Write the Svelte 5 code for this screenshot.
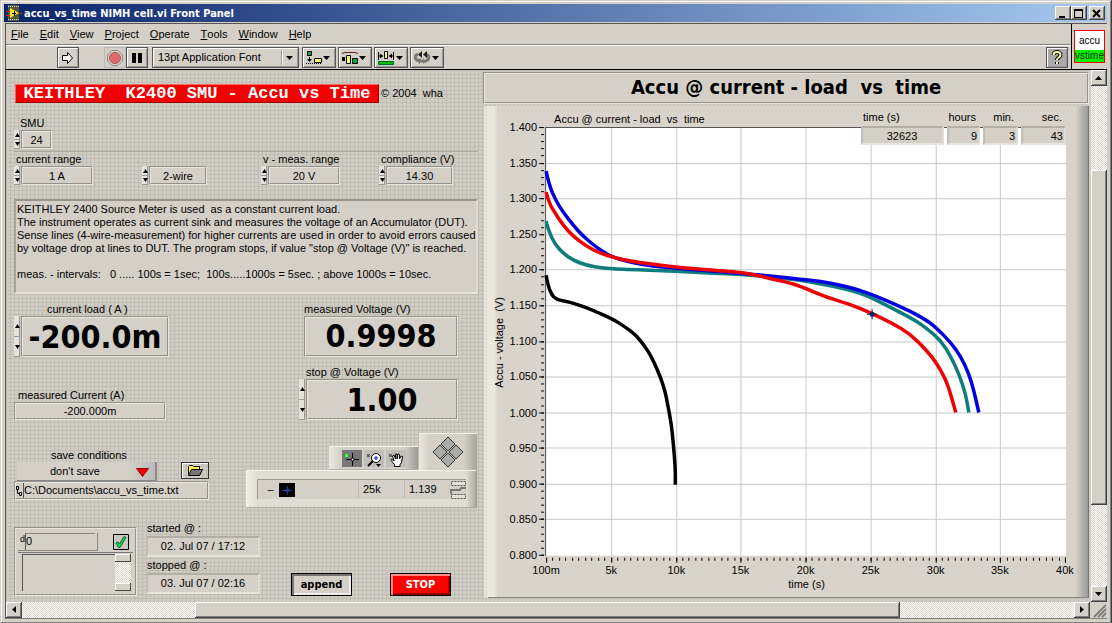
<script>
    const menus = ["File", "Edit", "View", "Project", "Operate", "Tools", "Window", "Help"];

    const PLOT_W = 519;
    const PLOT_H = 428;

    // points are relative to the top left corner of the plot area
    const curves = [
        {
            color: "#000",
            points: "0,148 2,159 6,168 9,171 14,173 24,175 34,178 47,183 67,192 78,199 89,207 98,218 105,229 111,242 116,255 119,265 121,275 125,296 127,316 129,340 129,357"
        },
        {
            color: "#0c7c7c",
            points: "0,94 3,105 9,117 17,126 27,133 40,138 57,141 77,142 130,144 167,146 194,147 227,150 254,153 287,159 304,163 320,168 340,178 367,192 380,201 394,213 404,229 412,246 419,267 422,285"
        },
        {
            color: "#0000e0",
            points: "0,44 3,58 10,74 17,85 27,98 37,109 49,119 59,126 67,130 84,135 107,139 130,141 167,144 194,146 227,149 254,152 274,154 294,158 310,162 325,167 344,175 364,184 380,193 389,200 404,215 414,229 422,246 427,263 432,285"
        },
        {
            color: "#f00000",
            points: "0,65 3,76 9,86 17,98 27,109 40,119 54,126 67,130 84,134 107,137 130,140 167,143 194,145 210,148 227,152 241,155 254,159 280,170 304,177 325,186 344,195 364,207 380,223 390,236 399,252 404,267 409,285"
        }
    ];

    const xTicks = ["100m", "5k", "10k", "15k", "20k", "25k", "30k", "35k", "40k"];
    const yTicks = Array.from({ length: 13 }, (_, i) => (1.4 - i * 0.05).toFixed(3));
    const tickX = (i) => Math.round((i * (PLOT_W - 1)) / 8);
    const tickY = (i) => Math.round((i * (PLOT_H - 1)) / 12);
    const minorX = Array.from({ length: 81 }, (_, i) => Math.round((i * (PLOT_W - 1)) / 80));
    const minorY = Array.from({ length: 61 }, (_, i) => Math.round((i * (PLOT_H - 1)) / 60));

    // rounds the corners by running through the midpoints
    function smooth(points) {
        const p = points.split(" ").map((s) => s.split(",").map(Number));
        let d = `M${p[0]}`;
        for (let i = 1; i < p.length - 1; i++) {
            const mid = [(p[i][0] + p[i + 1][0]) / 2, (p[i][1] + p[i + 1][1]) / 2];
            d += `Q${p[i]} ${mid}`;
        }
        return `${d}L${p[p.length - 1]}`;
    }

    let values = $state({
        smu: "24",
        range: "1 A",
        wire: "2-wire",
        vrange: "20 V",
        compliance: "14.30",
        load: "-200.0m",
        stop: "1.00",
        path: "C:\\Documents\\accu_vs_time.txt"
    });
</script>

{#snippet spinner(name)}
    <span class="spinner">
        <button aria-label="increase {name}"><svg viewBox="0 0 5 4"><path d="M0 4h5L2.500 0z" /></svg></button>
        <button aria-label="decrease {name}"><svg viewBox="0 0 5 4"><path d="M0 0h5L2.500 4z" /></svg></button>
    </span>
{/snippet}

{#snippet control(key, label, cls)}
    <div class="field {cls}">
        <label for={key}>{label}</label>
        <div class="control">
            {@render spinner(key)}
            <input id={key} class="box" bind:value={values[key]} />
        </div>
    </div>
{/snippet}

<div class="window">
    <header class="titlebar">
        <svg class="logo" viewBox="0 0 16 16" width="16" height="16">
            <path fill="#55553a" d="M2 0h11v16H2z" />
            <path stroke="#ddd" stroke-dasharray="1 1" d="M2 1.500h11M2 14.500h11" />
            <path fill="#ffe920" d="M4 3v10l9-5z" />
            <path stroke="#000" d="M6 8.500h4M8.500 6v5" />
            <path stroke="#e02020" d="M0 6.500h4M0 10.500h4M13 8.500h3" />
        </svg>
        <h1>accu_vs_time NIMH cell.vi Front Panel</h1>
        <div class="window-buttons">
            <button aria-label="Minimize"><svg viewBox="0 0 10 9"><path fill="#000" d="M1 7h6v2H1z" /></svg></button>
            <button aria-label="Maximize"><svg viewBox="0 0 10 9"><path fill="#000" fill-rule="evenodd" d="M0 0h9v9H0zM1 2v6h7V2z" /></svg></button>
            <button aria-label="Close" class="close"><svg viewBox="0 0 10 9"><path stroke="#000" stroke-width="2" d="M1 1l7 7M8 1L1 8" /></svg></button>
        </div>
    </header>

    <div class="bars">
        <nav class="menu">
            {#each menus as m}
                <button><u>{m[0]}</u>{m.slice(1)}</button>
            {/each}
        </nav>
        <div class="toolbar">
            <button class="tool run" aria-label="Run">
                <svg viewBox="0 0 14 14" width="14" height="14"><path fill="#fff" stroke="#000" d="M1.500 4.500h5v-3l5 5.500-5 5.500v-3h-5z" /></svg>
            </button>
            <button class="tool abort" aria-label="Abort">
                <svg viewBox="0 0 16 16" width="16" height="16">
                    <path fill="#d4d0c8" stroke="#888" d="M5 .5h6L15.500 5v6L11 15.500H5L.5 11V5z" />
                    <circle cx="8" cy="8" r="5.500" fill="#e06a6a" stroke="#a55" />
                </svg>
            </button>
            <button class="tool pause" aria-label="Pause">
                <svg viewBox="0 0 10 10" width="10" height="10"><path d="M0 0h4v10H0zM6 0h4v10H6z" /></svg>
            </button>
            <div class="font-select">
                <select aria-label="Text settings"><option>13pt Application Font</option></select>
                <svg viewBox="0 0 14 15" width="14" height="15"><path stroke="#999" d="M.5 0v15" /><path stroke="#fff" d="M1.500 0v15" /><path d="M5 6h7l-3.500 4z" /></svg>
            </div>
            <button class="tool menu-tool" aria-label="Align objects">
                <svg viewBox="0 0 26 14" width="26" height="14">
                    <path fill="#0a3" stroke="#000" d="M1.500.5h4v4h-4z" />
                    <path fill="#ffff60" stroke="#000" d="M8.500 7.500h7v4h-7z" />
                    <path stroke="#000" stroke-dasharray="1 1" d="M0 12.500h16" />
                    <path d="M3 6h1v2h2L3.500 11 1 8h2z" /><path d="M17 5h7l-3.500 4z" />
                </svg>
            </button>
            <button class="tool menu-tool" aria-label="Distribute objects">
                <svg viewBox="0 0 26 14" width="26" height="14">
                    <path fill="none" stroke="#622" d="M0 2.500l3-1h10l3 1" />
                    <path d="M0 6h3v4H0z" />
                    <path fill="#ffff60" stroke="#000" d="M4.500 4.500h4v8h-4z" />
                    <path fill="#0a3" stroke="#000" d="M10.500 7.500h5v5h-5z" /><path d="M17 5h7l-3.500 4z" />
                </svg>
            </button>
            <button class="tool menu-tool" aria-label="Resize objects">
                <svg viewBox="0 0 26 14" width="26" height="14">
                    <path fill="none" stroke="#000" d="M.5 1v8M15.500 1v8M1 5h4M11 5h4" />
                    <path d="M5 5L2 2.500v5zM11 5l3-2.500v5z" />
                    <path fill="#ffff60" stroke="#000" d="M6.500.5h3v7h-3z" />
                    <path fill="#0b0" stroke="#063" d="M.5 10.500h15v3H.5z" /><path d="M18 5h7l-3.500 4z" />
                </svg>
            </button>
            <button class="tool menu-tool" aria-label="Reorder">
                <svg viewBox="0 0 26 14" width="26" height="14">
                    <path fill="none" stroke="#777" stroke-width="3" d="M6 10C0 9 0 4 4 3.500M10 10.500c6-1 6-6 2-7" />
                    <path fill="#222" d="M8 0v7L4 3.500zM13 0v7L9 3.500z" /><path fill="#777" d="M5 7l4 3-4 3zM10 7v6l-3-3z" />
                    <path d="M18 5h7l-3.500 4z" />
                </svg>
            </button>
            <button class="tool help" aria-label="Context help">
                <svg viewBox="0 0 12 16" width="12" height="16">
                    <path fill="none" stroke="#000" stroke-width="4" d="M2.500 5c0-4 7-4 7 0 0 3-3.500 2-3.500 5M6 12v2" />
                    <path fill="none" stroke="#ffffb0" stroke-width="2" d="M2.500 5c0-4 7-4 7 0 0 3-3.500 2-3.500 5M6 12v2" />
                </svg>
            </button>
        </div>
        <div class="vi-icon"><div><span>accu</span><span>vstime</span></div></div>
    </div>

    <div class="body">
        <main class="panel">
            <section class="left">
                <div class="banner-row">
                    <h2>KEITHLEY  K2400 SMU - Accu vs Time</h2>
                    <span>© 2004  wha</span>
                </div>

                <div class="smu-row">{@render control("smu", "SMU", "smu")}</div>

                <div class="ranges">
                    {@render control("range", "current range", "w78")}
                    {@render control("wire", "", "w64")}
                    {@render control("vrange", "v - meas. range", "w78")}
                    {@render control("compliance", "compliance (V)", "w73")}
                </div>

                <div class="description">KEITHLEY 2400 Source Meter is used  as a constant current load.
The instrument operates as current sink and measures the voltage of an Accumulator (DUT).
Sense lines (4-wire-measurement) for higher currents are used in order to avoid errors caused
by voltage drop at lines to DUT. The program stops, if value "stop @ Voltage (V)" is reached.

meas. - intervals:   0 ..... 100s = 1sec;  100s.....1000s = 5sec. ; above 1000s = 10sec.</div>

                <div class="readings">
                    <div class="col">
                        {@render control("load", "current load ( A )", "big load")}
                        <div class="field measured-current">
                            <label for="mcur">measured Current (A)</label>
                            <output id="mcur" class="box">-200.000m</output>
                        </div>
                    </div>
                    <div class="col right">
                        <div class="field big">
                            <label for="mvolt">measured Voltage (V)</label>
                            <output id="mvolt" class="box">0.9998</output>
                        </div>
                        {@render control("stop", "stop @ Voltage (V)", "big stop")}
                    </div>
                </div>

                <div class="save-row">
                    <div class="save">
                        <label for="save">save conditions</label>
                        <div class="save-line">
                            <div class="save-select">
                                <select id="save"><option>don't save</option></select>
                                <svg viewBox="0 0 13 9" width="13" height="9"><path fill="#f00000" stroke="#900" d="M.5.5h12L6.500 8.500z" /></svg>
                            </div>
                            <button class="folder" aria-label="Browse">
                                <svg viewBox="0 0 16 11" width="16" height="11">
                                    <path fill="#ffe94a" stroke="#000" d="M1.500 9.500v-8l1-1h3l1 1h6v3" />
                                    <path fill="#777" stroke="#000" d="M1.500 10.500l3-6h11l-3 6z" />
                                </svg>
                            </button>
                        </div>
                        <div class="path box">
                            <svg viewBox="0 0 6 10" width="6" height="10"><path fill="none" stroke="#000" d="M.5.500h2v3h-2zM1.500 4v3.500h2M3.500 6.500h2v3h-2z" /></svg>
                            <input aria-label="file path" bind:value={values.path} />
                        </div>
                    </div>

                    <div class="cursor">
                        <div class="cursor-top">
                            <div class="palette">
                                <button class="on" aria-label="Cursor tool">
                                    <svg viewBox="0 0 20 16" width="20" height="16"><path fill="#3f3" d="M3 3h3v3H3z" /><path stroke="#000" d="M4 8.500h5M12 8.500h5M10.500 2v5M10.500 10v5" /><circle cx="10.500" cy="8.500" r="1.500" fill="#ddd" stroke="#000" /></svg>
                                </button>
                                <button aria-label="Zoom tool">
                                    <svg viewBox="0 0 18 16" width="18" height="16"><path fill="#666" d="M2 3h3v3H2z" /><path stroke="#000" stroke-width="2" d="M8 10l-5 5" /><circle cx="11" cy="7" r="4.500" fill="#fff" stroke="#000" /><path stroke="#00c" d="M9 7h4M11 5v4" /><path d="M11 13h5l-2.500 3z" /></svg>
                                </button>
                                <button aria-label="Pan tool">
                                    <svg viewBox="0 0 18 16" width="18" height="16"><path fill="#666" d="M2 3h3v3H2z" /><path fill="#fff" stroke="#000" d="M7.500 15.500v-2L4 9.500l.5-1.500 2.500 2-1.500-5L7 4l1.500 4V3H10v5l1-5 1.500.5V8L14 5l1.500.5-1 6-1.500 2v2z" /></svg>
                                </button>
                            </div>
                            <div class="mover">
                                <svg viewBox="0 0 32 32" width="32" height="32">
                                    <path fill="#aaa" stroke="#333" d="M16 1l7 7-7 7-7-7zM16 17l7 7-7 7-7-7zM8 9l7 7-7 7-7-7zM24 9l7 7-7 7-7-7z" />
                                </svg>
                            </div>
                        </div>
                        <div class="legend">
                            <div class="legend-inner">
                                <span class="minus">–</span>
                                <svg viewBox="0 0 16 14" width="16" height="14"><path d="M0 0h16v14H0z" /><path stroke="#1c3a90" d="M3 7.500h10M8.500 3v9" /><circle cx="8.500" cy="7.500" r="2" fill="#1c3a90" /></svg>
                                <span class="cell name"></span>
                                <span class="cell">25k</span>
                                <span class="cell">1.139</span>
                                <svg viewBox="0 0 16 18" width="16" height="18">
                                    <path fill="#e4e1da" stroke="#555" stroke-dasharray="2 1" d="M1.500.5h14v4h-14zM1.500 13.500h14v4h-14z" />
                                    <path stroke="#777" stroke-width="2" fill="none" d="M16 7H11l-1 2H1v4" />
                                </svg>
                            </div>
                        </div>
                    </div>
                </div>

                <div class="bottom-row">
                    <div class="error">
                        <div class="error-top">
                            <span class="code"><small>d</small><input aria-label="error code" value="0" /></span>
                            <svg viewBox="0 0 16 16" width="16" height="16"><path fill="#c8c8c0" stroke="#000" d="M.5.5h15v15H.5z" /><path fill="#1fd838" stroke="#064" d="M3 9l2-1 1.500 2L11 2.500l2 1L7 13.500H5.500z" /></svg>
                        </div>
                        <div class="source">
                            <textarea aria-label="error source"></textarea>
                            <div class="mini-scroll"><button aria-label="scroll source up"></button><button aria-label="scroll source down"></button></div>
                        </div>
                    </div>
                    <div class="times">
                        <label for="started">started @ :</label>
                        <output id="started" class="sunk">02. Jul 07 / 17:12</output>
                        <label for="stopped">stopped @ :</label>
                        <output id="stopped" class="sunk">03. Jul 07 / 02:16</output>
                    </div>
                    <button class="append">append</button>
                    <button class="stop-button">STOP</button>
                </div>
            </section>

            <section class="graph">
                <h2>Accu @ current - load  vs  time</h2>
                <div class="chart">
                    <svg viewBox="0 0 600 490">
                        <text x="66" y="17">Accu @ current - load&#160; vs&#160; time</text>
                        <g transform="translate(58 21)">
                            <rect width={PLOT_W} height={PLOT_H} fill="#fff" />
                            {#each xTicks as t, i}
                                {#if i > 0 && i < 8}<path stroke="#c8c8c8" d="M{tickX(i)}.500 0v{PLOT_H}" />{/if}
                                <path stroke="#000" d="M{tickX(i)}.500 430v5" />
                                <text x={tickX(i)} y="446" text-anchor="middle">{t}</text>
                            {/each}
                            {#each yTicks as t, i}
                                {#if i > 0 && i < 12}<path stroke="#c8c8c8" d="M0 {tickY(i)}.500h{PLOT_W}" />{/if}
                                <path stroke="#000" d="M-7 {tickY(i)}.500h5" />
                                <text x="-9" y={tickY(i) + 4} text-anchor="end">{t}</text>
                            {/each}
                            {#each minorX as x}<path stroke="#000" d="M{x}.500 430v3" />{/each}
                            {#each minorY as y}<path stroke="#000" d="M-5 {y}.500h3" />{/each}
                            <path fill="none" stroke="#555" d="M-.5 {PLOT_H}V.5H{PLOT_W}" />
                            {#each curves as c}
                                <path d={smooth(c.points)} fill="none" stroke={c.color} stroke-width="3.500" />
                            {/each}
                            <path stroke="#102060" d="M320.500 187h10M325.500 182v10" />
                            <circle cx="325.500" cy="187" r="2.500" fill="#102060" />
                        </g>
                        <text x="318" y="481" text-anchor="middle">time (s)</text>
                        <text transform="translate(15 236) rotate(-90)" text-anchor="middle">Accu - voltage&#160; (V)</text>
                    </svg>
                    <div class="elapsed">
                        <div class="time"><label for="sec-total">time (s)</label><output id="sec-total" class="sunk">32623</output></div>
                        <div><label for="hours">hours</label><output id="hours" class="sunk">9</output></div>
                        <div><label for="min">min.</label><output id="min" class="sunk">3</output></div>
                        <div class="sec"><label for="sec">sec.</label><output id="sec" class="sunk">43</output></div>
                    </div>
                </div>
            </section>
        </main>

        <div class="scroll vertical">
            <button aria-label="Scroll up"><svg viewBox="0 0 8 4" width="8" height="4"><path d="M0 4h7L3.500 0z" /></svg></button>
            <div class="track"><div class="thumb"></div></div>
            <button aria-label="Scroll down"><svg viewBox="0 0 8 4" width="8" height="4"><path d="M0 0h7L3.500 4z" /></svg></button>
        </div>
        <div class="scroll horizontal">
            <button aria-label="Scroll left"><svg viewBox="0 0 4 8" width="4" height="8"><path d="M4 0v7L0 3.500z" /></svg></button>
            <div class="track"><div class="thumb"></div></div>
            <button aria-label="Scroll right"><svg viewBox="0 0 4 8" width="4" height="8"><path d="M0 0v7l4-3.500z" /></svg></button>
        </div>
        <svg class="grip" viewBox="0 0 16 16"><path stroke="#808080" stroke-width="2" d="M3 15L15 3M7 15l8-8M11 15l4-4" /></svg>
    </div>
</div>

<style>
    :global(body) {
        margin: 0;
        background: #d4d0c8;
    }
    .window {
        --face: #d4d0c8;
        display: flex;
        flex-direction: column;
        box-sizing: border-box;
        min-height: 100vh;
        padding: 4px 5px 5px 4px;
        background: var(--face);
        box-shadow: inset -1px -1px #404040, inset 1px 1px #d4d0c8, inset -2px -2px #808080, inset 2px 2px #fff;
        color: #000;
        font: 11px/13px Tahoma, "Liberation Sans", sans-serif;
    }
    .window * {
        box-sizing: border-box;
    }
    h1, h2 {
        margin: 0;
        white-space: pre;
    }
    button, input, select, textarea {
        margin: 0;
        padding: 0;
        border: 0;
        border-radius: 0;
        background: none;
        color: inherit;
        font: inherit;
    }
    button {
        display: flex;
        align-items: center;
        justify-content: center;
    }
    select {
        appearance: none;
    }
    svg {
        display: block;
        flex: none;
    }

    .titlebar {
        display: flex;
        align-items: center;
        height: 18px;
        padding: 0 2px 0 2px;
        background: linear-gradient(90deg, #0a246a, #a6caf0);
        color: #fff;
    }
    h1 {
        flex: 1;
        margin-left: 2px;
        font: bold 11px/13px Tahoma, "DejaVu Sans Condensed", sans-serif;
    }
    .window-buttons {
        display: flex;
    }
    .window-buttons button {
        width: 16px;
        height: 14px;
        background: var(--face);
        box-shadow: inset -1px -1px #404040, inset 1px 1px #fff, inset -2px -2px #808080;
    }
    .window-buttons .close {
        margin-left: 2px;
    }
    .window-buttons svg {
        width: 10px;
        height: 9px;
    }

    .bars {
        display: grid;
        grid-template-columns: 1fr 36px;
        grid-template-rows: 21px 24px;
        margin: 1px 0 0 1px;
        border-top: 1px solid #555;
        border-left: 1px solid #555;
        border-bottom: 1px solid #000;
    }
    .menu {
        display: flex;
        gap: 11px;
        padding-left: 5px;
        border-bottom: 1px solid #808080;
    }
    .toolbar {
        display: flex;
        align-items: center;
        padding-right: 3px;
        border-top: 1px solid #fff;
    }
    .tool {
        width: 22px;
        height: 21px;
        border: 1px solid #555;
        box-shadow: inset 1px 1px #fff, inset -1px -1px #999;
    }
    .run {
        margin-left: 51px;
    }
    .abort {
        margin-left: 25px;
        border-color: #bbb;
        box-shadow: none;
    }
    .font-select {
        position: relative;
        width: 147px;
        height: 21px;
        margin: 0 3px 0 4px;
        border: 1px solid #555;
        box-shadow: inset 1px 1px #fff, inset -1px -1px #999;
    }
    .font-select select {
        width: 100%;
        height: 100%;
        padding: 0 20px 0 5px;
    }
    .font-select svg {
        position: absolute;
        right: 3px;
        top: 2px;
        pointer-events: none;
    }
    .menu-tool {
        width: 34px;
        margin-right: 2px;
    }
    .help {
        margin-left: auto;
        background: #aaa;
    }
    .vi-icon {
        grid-column: 2;
        grid-row: 1 / 3;
        padding: 6px 2px;
        border-left: 1px solid #000;
    }
    .vi-icon div {
        height: 33px;
        border: 1px solid #e00;
        background: linear-gradient(#fff 19px, #00f000 19px);
        text-align: center;
        font-size: 10px;
    }
    .vi-icon span {
        display: block;
        padding-top: 4px;
        line-height: 12px;
    }
    .vi-icon span:last-child {
        padding-top: 3px;
        color: #030;
    }

    .body {
        flex: 1;
        display: grid;
        grid-template-columns: 1fr 17px;
        grid-template-rows: 1fr 16px;
        margin-left: 1px;
        border-left: 1px solid #555;
        border-bottom: 1px solid #808080;
    }
    .panel {
        display: grid;
        grid-template-columns: 472px minmax(0, 1fr);
        gap: 5px;
        background-color: #d0cec4;
        background-image: linear-gradient(90deg, #bfbdb4 1px, transparent 1px), linear-gradient(#bfbdb4 1px, transparent 1px);
        background-size: 4px 4px;
    }
    .left {
        padding: 14px 0 5px 8px;
    }
    .banner-row {
        display: flex;
        align-items: center;
        gap: 2px;
        padding-left: 1px;
    }
    .banner-row h2 {
        width: 364px;
        height: 19px;
        border: 1px solid #f66;
        border-right-color: #900;
        border-bottom-color: #900;
        background: #f00000;
        color: #fff;
        text-align: center;
        font: bold 17px/18px "Courier New", "Liberation Mono", monospace;
    }
    .banner-row span {
        white-space: pre;
    }
    .field label {
        display: block;
        height: 13px;
        white-space: nowrap;
    }
    .control {
        display: flex;
        gap: 1px;
    }
    .box {
        display: block;
        flex: 1;
        min-width: 0;
        height: 19px;
        border: 2px groove #e8e5de;
        background: var(--face);
        text-align: center;
        line-height: 15px;
    }
    .spinner {
        display: flex;
        flex-direction: column;
        width: 6px;
    }
    .spinner button {
        flex: 1;
        background: #e6e3dc;
        box-shadow: inset -1px -1px #999;
    }
    .spinner svg {
        width: 5px;
        height: 4px;
    }
    .smu-row {
        margin-top: 14px;
        padding-bottom: 2px;
        border-bottom: 1px solid #aaa89f;
    }
    .smu {
        width: 38px;
    }
    .smu label {
        padding-left: 6px;
    }
    .ranges {
        display: grid;
        grid-template-columns: 128px 119px 118px 1fr;
        margin-top: 1px;
    }
    .ranges label {
        padding-left: 2px;
    }
    .w78 {
        width: 79px;
    }
    .w64 {
        width: 65px;
    }
    .w73 {
        width: 74px;
    }
    .description {
        height: 95px;
        margin: 14px 0 0 0;
        padding: 2px 0 0 1px;
        border: 2px solid;
        border-color: #96948c #dedbd3 #e6e4dc #a5a39b;
        background: var(--face);
        white-space: pre;
    }
    .readings {
        display: grid;
        grid-template-columns: 155px 159px;
        justify-content: space-between;
        margin: 9px 20px 0 0;
    }
    .col {
        display: flex;
        flex-direction: column;
        justify-content: space-between;
    }
    .big .box {
        width: 100%;
        height: 41px;
        font: bold 32px/37px Tahoma, "DejaVu Sans Condensed", sans-serif;
    }
    .load label {
        padding-left: 33px;
    }
    .right {
        gap: 9px;
    }
    .right .field:first-child {
        padding-left: 5px;
    }
    .stop label {
        padding-left: 7px;
    }
    .measured-current {
        width: 152px;
    }
    .measured-current label {
        padding-left: 4px;
    }
    .measured-current .box {
        height: 18px;
        line-height: 14px;
    }

    .save-row {
        display: flex;
        justify-content: space-between;
        margin: 12px 1px 0 0;
    }
    .save {
        width: 195px;
        padding-top: 17px;
    }
    .save label {
        padding-left: 37px;
    }
    .save-line {
        display: flex;
        justify-content: space-between;
        padding-left: 3px;
    }
    .save-select {
        position: relative;
        width: 140px;
        height: 19px;
        border-right: 2px solid #888;
        border-bottom: 1px solid #888;
        background: linear-gradient(90deg, var(--face) 110px, #bbb);
    }
    .save-select select {
        width: 100%;
        height: 100%;
        padding-left: 33px;
    }
    .save-select svg {
        position: absolute;
        right: 6px;
        top: 6px;
        pointer-events: none;
    }
    .folder {
        width: 28px;
        height: 17px;
        border: 1px solid #333;
        box-shadow: inset 1px 1px #fff;
    }
    .path {
        display: flex;
        align-items: center;
        gap: 1px;
    }
    .path input {
        flex: 1;
        min-width: 0;
        height: 15px;
        border-left: 1px solid #555;
    }
    .cursor {
        width: 231px;
        padding-top: 1px;
    }
    .cursor-top {
        display: flex;
        justify-content: flex-end;
        align-items: flex-end;
        gap: 1px;
    }
    .palette {
        display: flex;
        gap: 2px;
        width: 89px;
        height: 24px;
        padding: 3px 0 0 13px;
        background: linear-gradient(90deg, #ebe8e0, #d4d0c8 12px, #d4d0c8 75px, #999);
        border-top: 1px solid #f4f2ec;
        border-bottom: 1px solid #b5b2aa;
    }
    .palette button {
        width: 20px;
        height: 17px;
        background: #c0beb8;
    }
    .palette .on {
        background: #777;
    }
    .mover {
        display: flex;
        justify-content: center;
        width: 58px;
        height: 37px;
        padding-top: 2px;
        background: linear-gradient(90deg, #ebe8e0, #d4d0c8 10px, #d4d0c8 45px, #a5a39c);
        border-top: 1px solid #f4f2ec;
    }
    .legend {
        padding: 8px 10px 8px;
        border: 1px solid;
        border-color: #f4f2ec #999 #aaa #f4f2ec;
        background: linear-gradient(90deg, #efece4, #e0ddd4 10px, #e0ddd4 calc(100% - 10px), #aaa8a0);
    }
    .legend-inner {
        display: flex;
        align-items: center;
        gap: 4px;
        height: 20px;
        padding-left: 8px;
        border-top: 1px solid #999;
        border-left: 1px solid #999;
        background: var(--face);
    }
    .minus {
        width: 9px;
        text-align: center;
    }
    .cell {
        height: 17px;
        width: 42px;
        padding-left: 4px;
        border-left: 1px solid #bbb;
        line-height: 17px;
    }
    .name {
        flex: 1;
        border: 0;
    }

    .bottom-row {
        display: flex;
        align-items: flex-end;
        margin-top: 14px;
    }
    .error {
        width: 123px;
        height: 69px;
        padding: 2px;
        border: 2px groove #e8e5de;
        background: var(--face);
    }
    .error-top {
        display: flex;
        justify-content: space-between;
        align-items: center;
        height: 21px;
        padding-right: 4px;
    }
    .code {
        display: flex;
        width: 80px;
        height: 18px;
        padding-left: 2px;
        border-right: 1px solid #888;
        border-bottom: 1px solid #888;
    }
    .code small {
        font-size: 9px;
    }
    .code input {
        width: 70px;
        border-left: 1px solid #555;
        border-top: 1px solid #888;
    }
    .source {
        display: flex;
        height: 40px;
        padding: 1px 2px 1px 4px;
        border-top: 1px solid #777;
    }
    .source textarea {
        flex: 1;
        min-width: 0;
        border-left: 1px solid #555;
        border-top: 1px solid #555;
        resize: none;
    }
    .mini-scroll, .track {
        background: repeating-conic-gradient(#fff 0 25%, #d8d5cd 0 50%) 0 0 / 2px 2px;
    }
    .mini-scroll {
        display: flex;
        flex-direction: column;
        justify-content: space-between;
        width: 16px;
    }
    .mini-scroll button {
        height: 8px;
        background: var(--face);
        box-shadow: inset -1px -1px #444, inset 1px 1px #fff;
    }
    .times {
        width: 114px;
        margin-left: 9px;
    }
    .times label {
        display: block;
        padding-left: 1px;
    }
    .sunk {
        display: block;
        height: 19px;
        border: 2px solid;
        border-color: #b0aea6 #dedbd3 #e6e4dc #c0beb6;
        background: var(--face);
        text-align: center;
        line-height: 17px;
    }
    .times .sunk {
        margin: 1px 0 2px;
        height: 21px;
    }
    .append, .stop-button {
        width: 61px;
        height: 23px;
        border: 1px solid #000;
        box-shadow: inset 2px 2px #777, inset -2px -2px #eee;
        font: bold 11px/13px Tahoma, "DejaVu Sans Condensed", sans-serif;
    }
    .append {
        margin-left: 31px;
        background: var(--face);
    }
    .stop-button {
        margin-left: 38px;
        background: #f00;
        color: #fff;
        box-shadow: inset 2px 2px #f88, inset -2px -2px #900;
    }

    .graph {
        min-width: 0;
        padding: 2px 1px 4px 0;
    }
    .graph h2 {
        height: 32px;
        margin-bottom: 2px;
        border: 2px groove #e8e5de;
        background: var(--face);
        text-align: center;
        font: bold 20px/27px Tahoma, "DejaVu Sans Condensed", sans-serif;
    }
    .chart {
        position: relative;
        margin-left: 5px;
        border-bottom: 1px solid #888;
        background: linear-gradient(90deg, #ebe8de 6px, #d8d4cc 10px, #d8d4cc calc(100% - 14px), #999 calc(100% - 1px), #555);
        box-shadow: -4px 0 #e4e1d8;
    }
    .chart > svg {
        width: 100%;
        height: auto;
    }
    .elapsed {
        position: absolute;
        top: 5px;
        right: 23px;
        display: grid;
        grid-template-columns: 83px 33px 35px 45px;
        gap: 3px;
        text-align: right;
    }
    .elapsed label {
        display: block;
        height: 15px;
        padding-right: 4px;
    }
    .elapsed .sunk {
        padding-right: 1px;
        text-align: right;
    }
    .elapsed .time label {
        padding-left: 2px;
        text-align: left;
    }
    .elapsed .time .sunk {
        text-align: center;
    }

    .scroll {
        display: flex;
    }
    .scroll button {
        flex: none;
        width: 16px;
        height: 16px;
    }
    .scroll button, .thumb {
        background: var(--face);
        box-shadow: inset -1px -1px #404040, inset 1px 1px #fff, inset -2px -2px #808080;
    }
    .track {
        flex: 1;
        display: flex;
    }
    .vertical {
        flex-direction: column;
        width: 16px;
        margin-left: 1px;
    }
    .vertical .track {
        flex-direction: column;
    }
    .vertical .thumb {
        height: 67%;
        margin-top: 84px;
    }
    .horizontal .thumb {
        width: 67%;
        margin-left: 173px;
    }
    .grip {
        width: 16px;
        height: 16px;
        margin-left: 1px;
    }
    text {
        font-size: 11px;
    }
</style>
